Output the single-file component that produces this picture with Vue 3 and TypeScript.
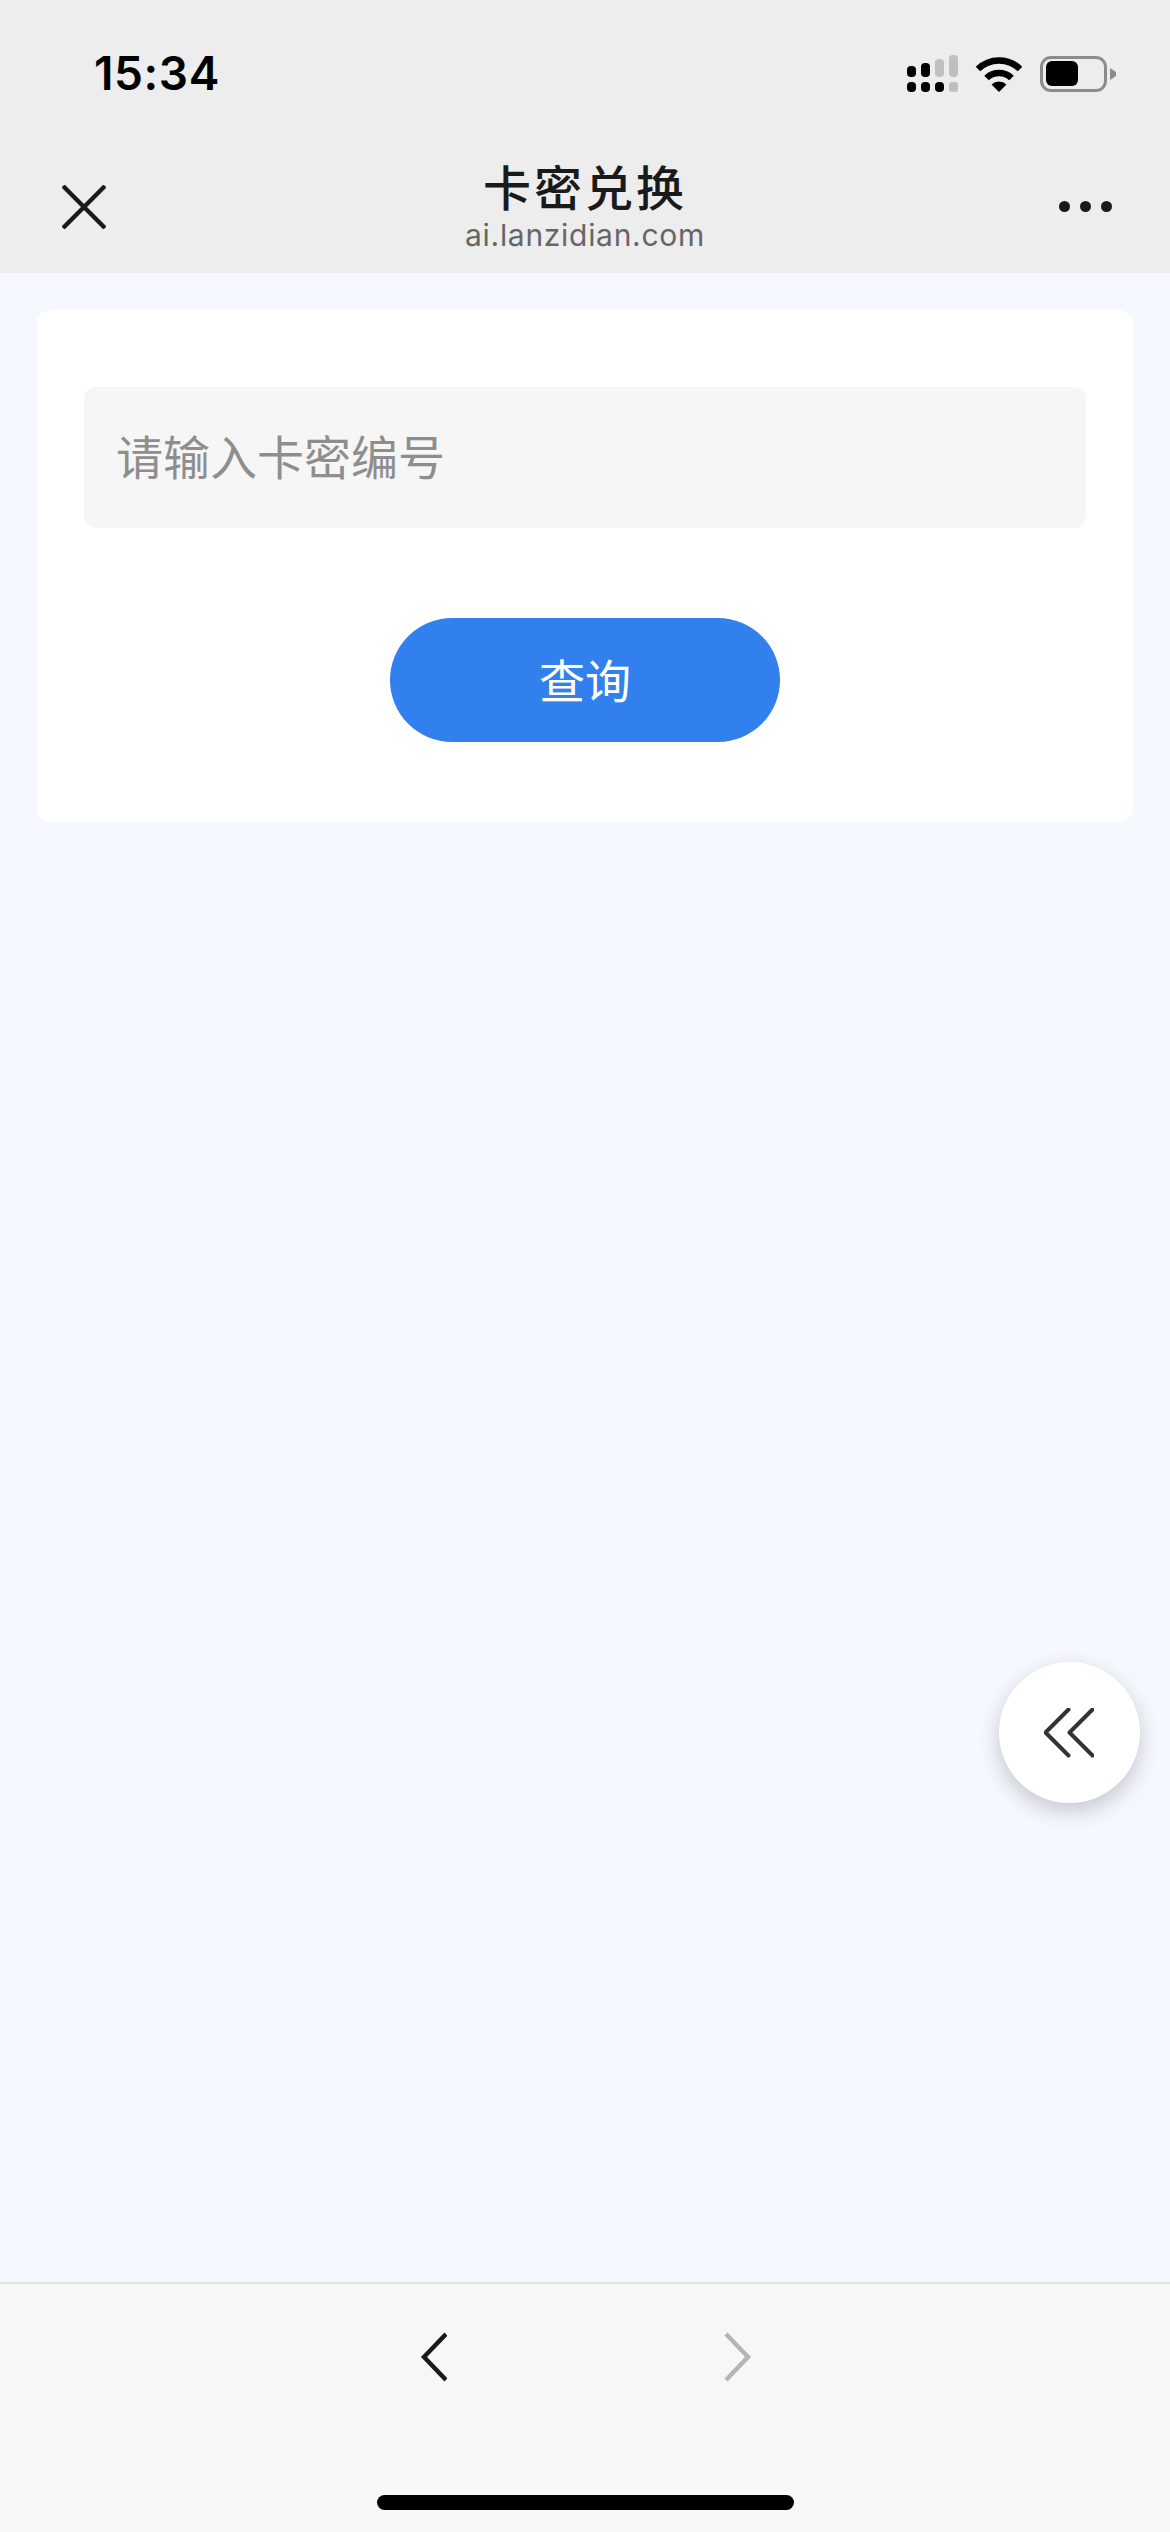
<script setup lang="ts">
const title: string = '卡密兑换'
const domain: string = 'ai.lanzidian.com'
</script>

<template>
  <div class="phone">
    <header class="header">
      <div class="status">
        <span class="time">15:34</span>
        <div class="status-icons">
          <svg class="signal" width="51" height="37" viewBox="0 0 51 37">
            <rect x="0" y="11" width="9" height="11" rx="4" fill="#000" />
            <rect x="14" y="8" width="9" height="14" rx="4" fill="#000" />
            <rect x="28" y="4" width="9" height="18" rx="4" fill="#bfbfbf" />
            <rect x="42" y="0" width="9" height="22" rx="4" fill="#bfbfbf" />
            <rect x="0" y="27" width="9" height="10" rx="4" fill="#000" />
            <rect x="14" y="27" width="9" height="10" rx="4" fill="#000" />
            <rect x="28" y="27" width="9" height="10" rx="4" fill="#000" />
            <rect x="42" y="27" width="9" height="10" rx="3" fill="#bfbfbf" />
          </svg>
          <svg class="wifi" width="48" height="36" viewBox="0 0 48 36">
            <path d="M3 13 A30 30 0 0 1 45 13" fill="none" stroke="#000" stroke-width="6.5" />
            <path d="M11.5 22 A18 18 0 0 1 36.5 22" fill="none" stroke="#000" stroke-width="6.5" />
            <path d="M24 36 L16.5 28.5 A11 11 0 0 1 31.5 28.5 Z" fill="#000" />
          </svg>
          <div class="battery">
            <div class="battery-body"><div class="battery-fill"></div></div>
            <svg class="battery-nub" width="6" height="12" viewBox="0 0 6 12">
              <path d="M0 0 L6 4 L6 8 L0 12 Z" fill="#8c8c8c" />
            </svg>
          </div>
        </div>
      </div>
      <nav class="nav">
        <svg class="close" width="44" height="44" viewBox="0 0 44 44">
          <path d="M1 1 L43 43 M43 1 L1 43" fill="none" stroke="#1a1a1a" stroke-width="4.4" />
        </svg>
        <div class="titles">
          <div class="title">{{ title }}</div>
          <div class="domain">{{ domain }}</div>
        </div>
        <div class="more">
          <i></i><i></i><i></i>
        </div>
      </nav>
    </header>

    <main class="main">
      <section class="card">
        <input class="code-input" type="text" placeholder="请输入卡密编号" />
        <button class="query" type="button">查询</button>
      </section>
      <button class="float" type="button" aria-label="展开">
        <svg width="50" height="50" viewBox="0 0 50 50">
          <path d="M24.5 1.5 L1.5 24.5 L24.5 47.5 M48.5 1.5 L25.5 24.5 L48.5 47.5" fill="none" stroke="#333" stroke-width="4" stroke-linecap="round" stroke-linejoin="round" />
        </svg>
      </button>
    </main>

    <footer class="footer">
      <div class="arrows">
        <svg width="30" height="54" viewBox="0 0 30 54">
          <path d="M29 4 L7 27 L29 50" fill="none" stroke="#1a1a1a" stroke-width="4.4" />
        </svg>
        <svg width="30" height="54" viewBox="0 0 30 54">
          <path d="M3 4 L25 27 L3 50" fill="none" stroke="#b5b5b5" stroke-width="4.4" />
        </svg>
      </div>
      <div class="home-bar"></div>
    </footer>
  </div>
</template>

<style>
html, body { margin: 0; padding: 0; background: #f5f8ff; }
</style>

<style scoped>
.phone {
  width: 1170px;
  height: 2532px;
  display: flex;
  flex-direction: column;
  overflow: hidden;
  background: #f5f8ff;
  font-family: "Noto Sans CJK SC", "Noto Sans", sans-serif;
}
.header {
  height: 273px;
  flex: none;
  background: #ededed;
  display: flex;
  flex-direction: column;
}
.status {
  height: 37px;
  padding: 55px 54px 0 94px;
  display: flex;
  justify-content: space-between;
  align-items: center;
}
.time {
  font-family: Inter, sans-serif;
  font-size: 46px;
  font-weight: 600;
  letter-spacing: 0.6px;
  line-height: 37px;
  color: #000;
}
.status-icons {
  display: flex;
  align-items: center;
  gap: 17px;
}
.signal, .wifi { display: block; }
.battery {
  display: flex;
  align-items: center;
  gap: 3px;
}
.battery-body {
  width: 67px;
  height: 36px;
  box-sizing: border-box;
  border: 3.5px solid #8c8c8c;
  border-radius: 11px;
  padding: 2.5px;
}
.battery-fill {
  width: 32px;
  height: 100%;
  background: #000;
  border-radius: 6px;
}
.nav {
  flex: 1;
  display: grid;
  grid-template-columns: 1fr auto 1fr;
  align-items: center;
  padding: 0 60px;
}
.close { display: block; margin: 48px 0 0 2px; }
.titles {
  text-align: center;
  margin-top: 43px;
}
.title {
  font-size: 48px;
  font-weight: 500;
  line-height: 56px;
  letter-spacing: 3px;
  color: #1a1a1a;
}
.domain {
  font-family: Inter, "Noto Sans", sans-serif;
  font-size: 30px;
  line-height: 34px;
  letter-spacing: 0.7px;
  margin-top: 5px;
  color: #666;
}
.more {
  justify-self: end;
  display: flex;
  gap: 10px;
  margin: 48px -2px 0 0;
}
.more i {
  display: block;
  width: 11px;
  height: 11px;
  border-radius: 50%;
  background: #1a1a1a;
}
.main {
  position: relative;
  flex: 1;
  padding: 37px;
}
.card {
  height: 512px;
  box-sizing: border-box;
  background: #fff;
  border-radius: 14px;
  padding: 77px 47px 0;
  display: flex;
  flex-direction: column;
  align-items: center;
}
.code-input {
  width: 100%;
  height: 141px;
  box-sizing: border-box;
  border: 0;
  outline: 0;
  background: #f6f6f6;
  border-radius: 12px;
  padding: 0 32px 6px;
  font-family: inherit;
  font-size: 47px;
  color: #333;
}
.code-input::placeholder {
  color: #8e8e8e;
  opacity: 1;
}
.query {
  width: 390px;
  height: 124px;
  margin-top: 90px;
  border: 0;
  border-radius: 62px;
  background: #3280ee;
  color: #fff;
  font-family: inherit;
  font-size: 46px;
  padding: 0 0 4px;
}
.float {
  position: absolute;
  left: 999px;
  top: 1389px;
  width: 141px;
  height: 141px;
  padding: 0;
  border: 0;
  border-radius: 50%;
  background: #fff;
  box-shadow: 0 8px 22px rgba(0, 0, 0, 0.2);
  display: flex;
  align-items: center;
  justify-content: center;
}
.float svg { display: block; margin-left: -1px; }
.footer {
  height: 250px;
  flex: none;
  box-sizing: border-box;
  border-top: 2px solid #dfe2e6;
  background: #f7f7f7;
  display: flex;
  flex-direction: column;
  align-items: center;
}
.arrows {
  display: flex;
  gap: 276px;
  margin-top: 46px;
}
.arrows svg { display: block; }
.home-bar {
  width: 417px;
  height: 15px;
  margin-top: 111px;
  border-radius: 8px;
  background: #000;
}
</style>
